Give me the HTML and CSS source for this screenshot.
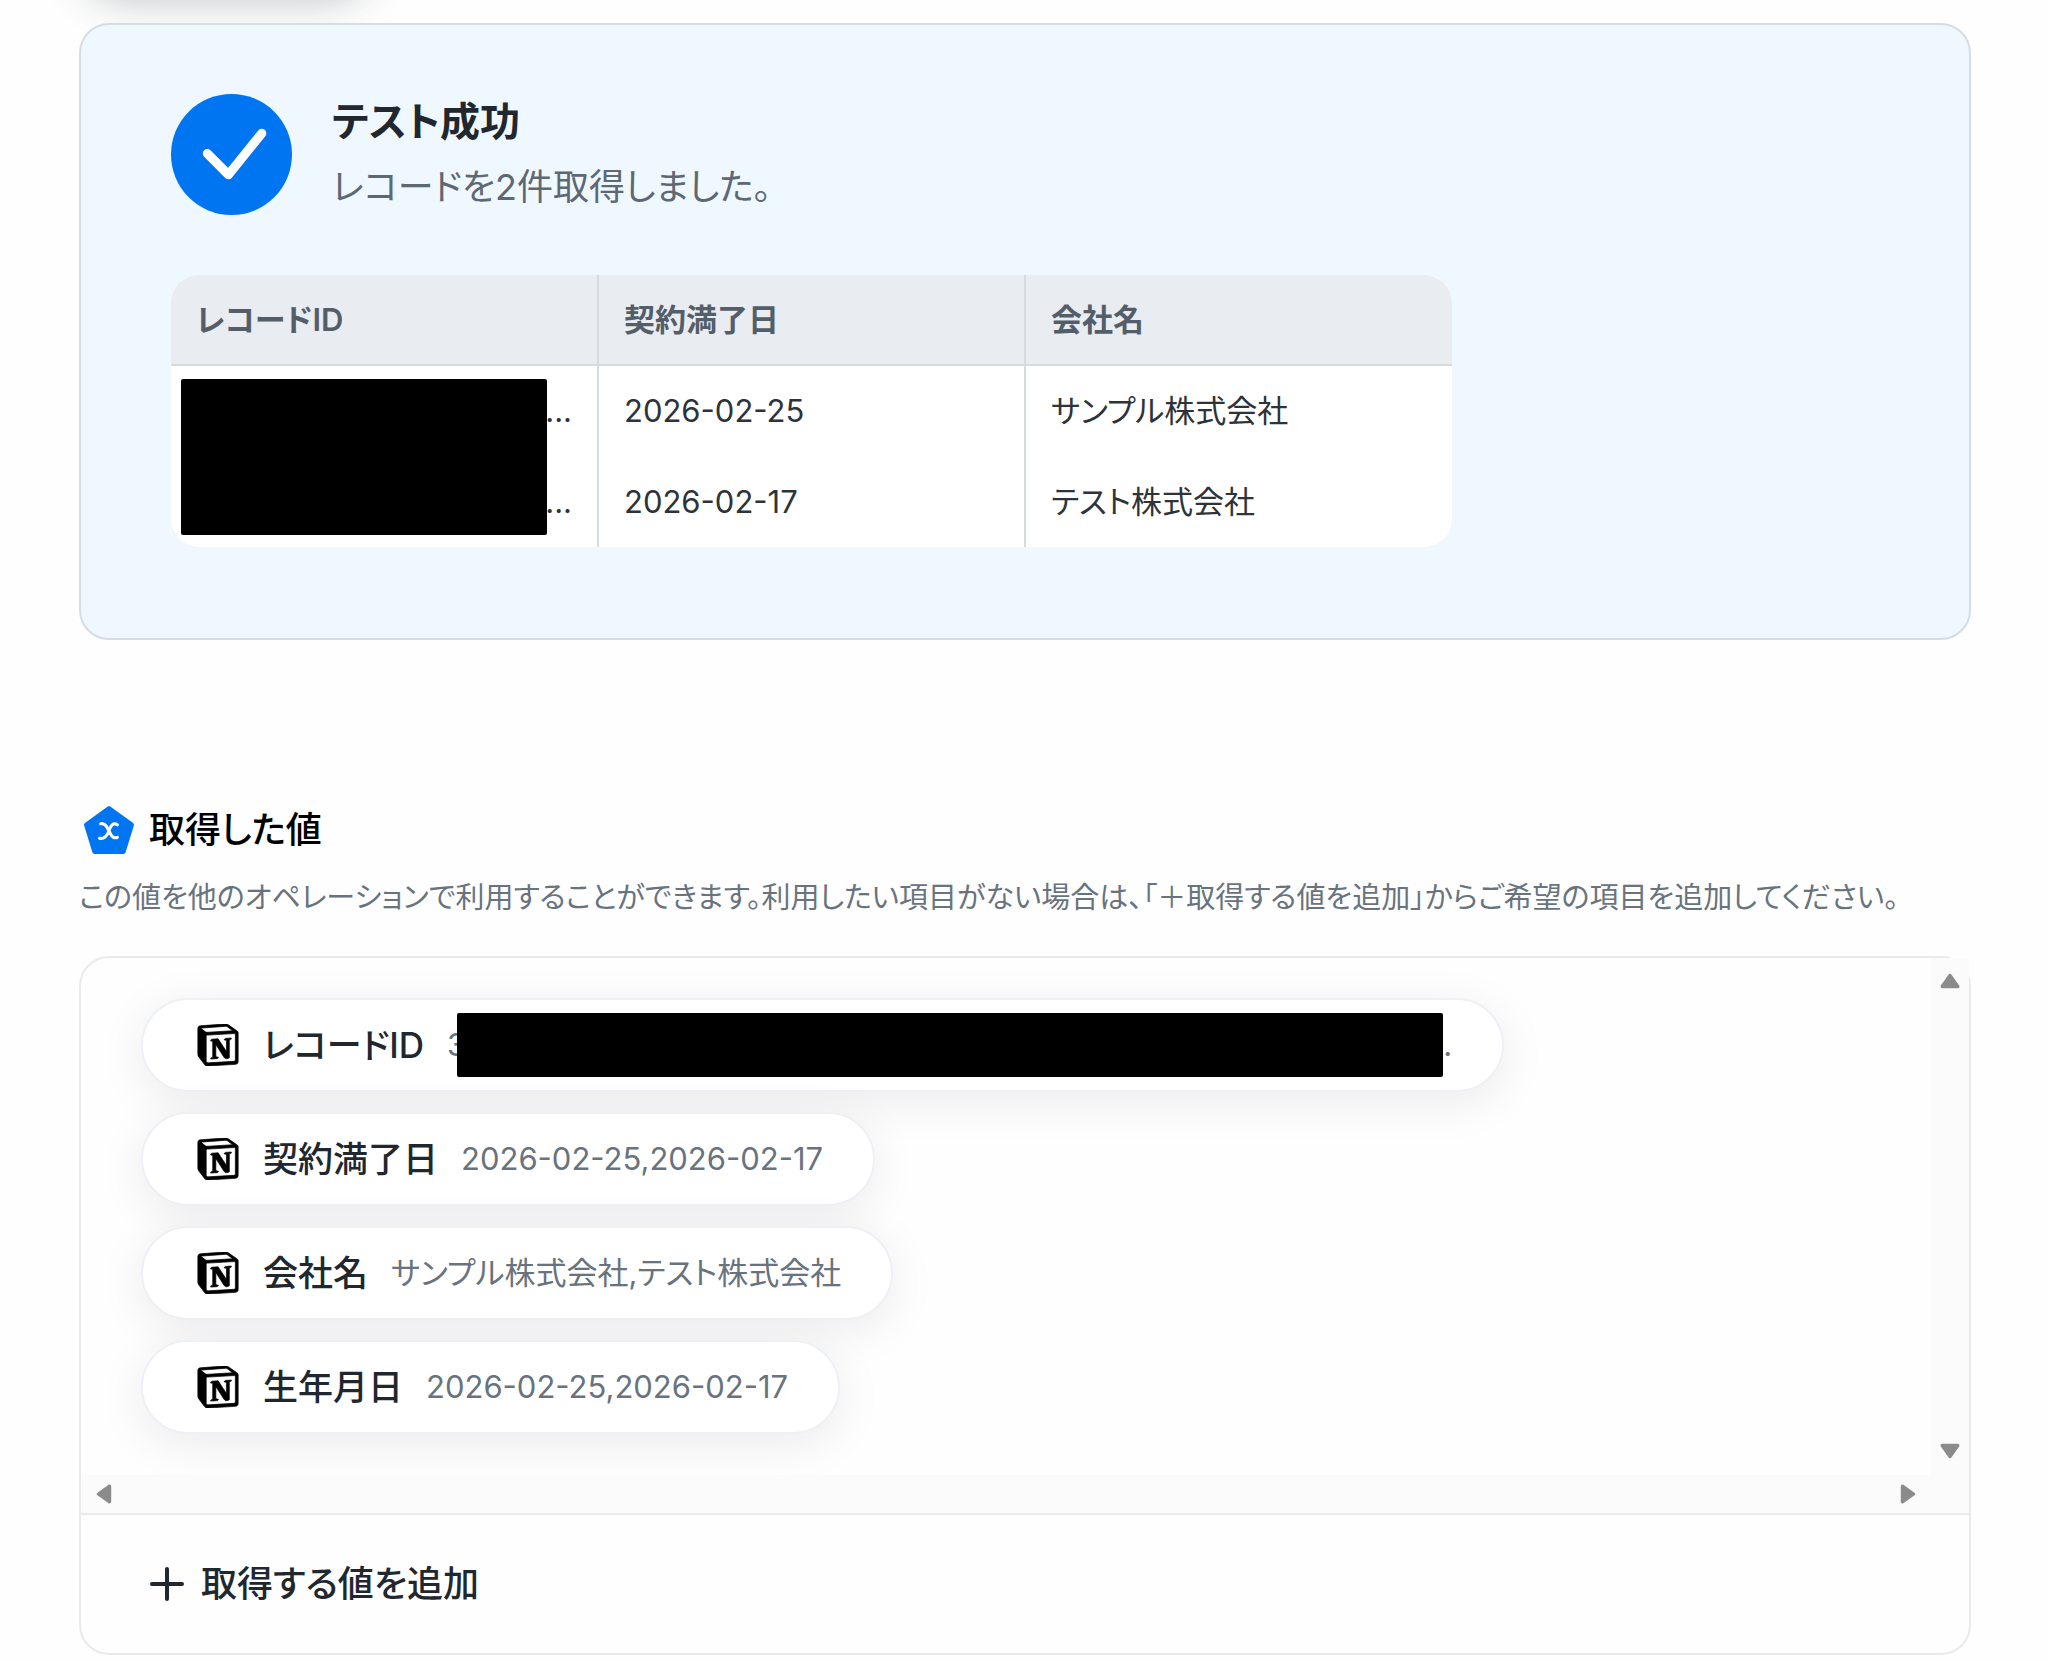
FILE: index.html
```html
<!DOCTYPE html>
<html lang="ja">

<head>
    <meta charset="utf-8">
    <title>テスト結果</title>
    <meta name="viewport" content="width=device-width, initial-scale=1">
    <link rel="stylesheet" href="styles.css">
</head>

<body>
    <!-- icons used more than once -->
    <svg class="sprite" aria-hidden="true">
        <symbol id="notion" viewBox="0 0 24 24">
            <path fill="#fff" d="M1 1.500L17 .800 23 5V22L5 23.500 1 18z" />
            <path fill="#000" d="M1 2L5 6.500V23L1 18z" />
            <path stroke="#000" stroke-width=".4" d="M4.459 4.208c.746.606 1.026.56 2.428.466l13.215-.793c.28 0 .047-.28-.046-.326L17.86 1.968c-.42-.326-.981-.7-2.055-.607L3.01 2.295c-.466.046-.56.28-.374.466zM1.936 1.035l13.31-.98c1.634-.14 2.055-.047 3.082.7l4.249 2.986c.7.513.934.653.934 1.213v16.378c0 1.026-.373 1.634-1.68 1.726l-15.458.934c-.98.047-1.448-.093-1.962-.747l-3.129-4.06c-.56-.747-.793-1.306-.793-1.96V2.667c0-.839.374-1.54 1.447-1.632zM5.252 7.288v13.904c0 .747.373 1.027 1.214.98l14.523-.84c.841-.046.935-.56.935-1.167V6.354c0-.606-.233-.933-.748-.887l-15.177.887c-.56.047-.747.327-.747.933zm14.337.745c.093.42 0 .84-.42.888l-.7.14v10.264c-.608.327-1.168.514-1.635.514-.748 0-.935-.234-1.495-.933l-4.577-7.186v6.952L12.210 19s0 .84-1.168.84l-3.222.186c-.093-.186 0-.653.327-.746l.84-.233V9.854L7.822 9.760c-.094-.42.14-1.026.793-1.073l3.456-.233 4.764 7.279v-6.440l-1.215-.139c-.093-.514.28-.887.747-.933z" />
        </symbol>
        <symbol id="arrow" viewBox="0 0 18 14">
            <path d="M9 2L16 12H2z" stroke-width="3" stroke-linejoin="round" />
        </symbol>
    </svg>

    <div class="allcontent">
        <div class="previous"></div>

        <section class="result">
            <div class="resultHead">
                <svg class="check" viewBox="0 0 120 120">
                    <circle cx="60" cy="60" r="60" />
                    <path d="M36 59L57 80L90 39" />
                </svg>
                <div>
                    <h1>テスト成功</h1>
                    <p>レコードを2件取得しました。</p>
                </div>
            </div>
            <div class="tableBox">
                <table>
                    <thead>
                        <tr>
                            <th>レコードID</th>
                            <th>契約満了日</th>
                            <th>会社名</th>
                        </tr>
                    </thead>
                    <tbody>
                        <tr>
                            <td class="idCell">...</td>
                            <td>2026-02-25</td>
                            <td>サンプル株式会社</td>
                        </tr>
                        <tr>
                            <td class="idCell">...</td>
                            <td>2026-02-17</td>
                            <td>テスト株式会社</td>
                        </tr>
                    </tbody>
                </table>
                <span class="mask"></span>
            </div>
        </section>

        <section class="values">
            <h2>
                <svg class="pentagon" viewBox="0 0 50 50">
                    <path class="shape" d="M25 4L47 20L39 46H11L3 20z" />
                    <path class="cross" d="M17 19Q21 18 24 24L26 28Q29 34 33 32M33 20Q29 17 26 23L24 28Q21 34 16 33" />
                </svg>
                取得した値
            </h2>
            <p class="help">この値を他のオペレーションで利用することができます。利用したい項目がない場合は、「＋取得する値を追加」からご希望の項目を追加してください。</p>

            <div class="valueBox">
                <div class="scroller">
                    <ul>
                        <li>
                            <svg class="notion"><use href="#notion" /></svg>
                            <span class="label">レコードID</span>
                            <span class="value masked">3<span class="bar"></span>.</span>
                        </li>
                        <li>
                            <svg class="notion"><use href="#notion" /></svg>
                            <span class="label">契約満了日</span>
                            <span class="value">2026-02-25,2026-02-17</span>
                        </li>
                        <li>
                            <svg class="notion"><use href="#notion" /></svg>
                            <span class="label">会社名</span>
                            <span class="value">サンプル株式会社,テスト株式会社</span>
                        </li>
                        <li>
                            <svg class="notion"><use href="#notion" /></svg>
                            <span class="label">生年月日</span>
                            <span class="value">2026-02-25,2026-02-17</span>
                        </li>
                    </ul>
                    <div class="track vertical">
                        <svg class="arrow"><use href="#arrow" /></svg>
                        <svg class="arrow down"><use href="#arrow" /></svg>
                    </div>
                    <div class="track horizontal">
                        <svg class="arrow left"><use href="#arrow" /></svg>
                        <svg class="arrow right"><use href="#arrow" /></svg>
                    </div>
                    <div class="track"></div>
                </div>
                <button class="add" type="button">
                    <svg class="plus" viewBox="0 0 34 34">
                        <path d="M17 2V32M2 17H32" />
                    </svg>
                    取得する値を追加
                </button>
            </div>
        </section>
    </div>
</body>

</html>
```
FILE: styles.css
```css
* {
    box-sizing: border-box;
}

body {
    margin: 0;
    background: #fefefe;
    color: #21272e;
    font-family: Inter, "Noto Sans CJK JP", sans-serif;
    font-feature-settings: "palt";
    overflow-x: hidden;
}

h1,
h2,
p,
ul {
    margin: 0;
    padding: 0;
}

.sprite {
    display: none;
}

.allcontent {
    padding: 0 77px 6px 79px;
}

/* button above the fold, only its shadow reaches in */
.previous {
    width: 290px;
    height: 92px;
    margin: -98px 0 29px 2px;
    border-radius: 46px;
    box-shadow: 0 4px 44px rgba(30, 40, 50, .3);
}

.result {
    padding: 69px 90px 91px;
    background: #eff7ff;
    border: 2px solid #d5dde4;
    border-radius: 30px;
}

.resultHead {
    display: flex;
    gap: 40px;
    margin-bottom: 60px;
}

.check {
    width: 121px;
    height: 121px;
    fill: #0075f2;
}

.check path {
    fill: none;
    stroke: #fff;
    stroke-width: 9;
    stroke-linecap: round;
    stroke-linejoin: round;
}

h1 {
    font-size: 40px;
    line-height: 56px;
    font-weight: 600;
}

.resultHead p {
    margin-top: 12px;
    font-size: 36px;
    line-height: 50px;
    color: #5e6873;
}

.tableBox {
    position: relative;
    width: 75%;
    border-radius: 28px;
    background: #fff;
    overflow: hidden;
}

table {
    width: 100%;
    border-collapse: collapse;
    table-layout: fixed;
    font-size: 31px;
    line-height: 40px;
}

th,
td {
    height: 91px;
    padding: 0 25px;
    text-align: left;
    border-left: 2px solid #d5dbe1;
}

th:first-child,
td:first-child {
    border-left: none;
}

th {
    height: 90px;
    background: #e9ecf1;
    border-bottom: 2px solid #d5dbe1;
    color: #535e69;
    font-weight: 600;
}

td {
    color: #2d3339;
}

.idCell {
    text-align: right;
}

.mask {
    position: absolute;
    left: 10px;
    top: 104px;
    width: 366px;
    height: 156px;
    border-radius: 2px;
    background: #000;
}

.values {
    margin-top: 160px;
}

h2 {
    display: flex;
    align-items: center;
    gap: 14px;
    padding-left: 4px;
    font-size: 36px;
    line-height: 60px;
    font-weight: 500;
    color: #000;
}

.pentagon {
    width: 52px;
    height: 52px;
}

.pentagon .shape {
    fill: #0075f2;
    stroke: #0075f2;
    stroke-width: 4;
    stroke-linejoin: round;
}

.pentagon .cross {
    fill: none;
    stroke: #fff;
    stroke-width: 3;
    stroke-linecap: round;
}

.help {
    margin: 18px 0 38px;
    font-size: 29px;
    line-height: 40px;
    color: #68737d;
}

.valueBox {
    border: 2px solid #e9eaeb;
    border-radius: 30px;
}

.scroller {
    display: grid;
    grid-template-columns: 1fr 38px;
    border-bottom: 2px solid #e9eaeb;
}

ul {
    display: flex;
    flex-direction: column;
    align-items: flex-start;
    gap: 20px;
    padding: 40px 60px 41px;
    list-style: none;
}

li {
    display: flex;
    align-items: center;
    height: 94px;
    padding: 0 50px 0 54px;
    line-height: 44px;
    background: #fff;
    border: 2px solid #edf1f5;
    border-radius: 47px;
    box-shadow: 0 10px 48px rgba(0, 0, 0, .08);
}

.notion {
    width: 42px;
    height: 42px;
    margin-right: 24px;
}

.label {
    margin-right: 23px;
    font-size: 35px;
    font-weight: 500;
}

.value {
    font-size: 31px;
    color: #68737d;
}

.masked {
    display: flex;
    align-items: center;
}

.bar {
    width: 986px;
    height: 64px;
    margin-left: -9px;
    border-radius: 2px;
    background: #000;
}

.track {
    display: flex;
    align-items: center;
    justify-content: space-between;
    background: #fbfbfb;
}

.vertical {
    flex-direction: column;
    padding: 15px 0 16px;
}

.horizontal {
    height: 38px;
    padding: 0 13px;
}

.arrow {
    width: 20px;
    height: 16px;
    fill: #8b8b8b;
    stroke: #8b8b8b;
}

.down {
    transform: rotate(180deg);
}

.left {
    transform: rotate(-90deg);
}

.right {
    transform: rotate(90deg);
}

.add {
    display: flex;
    align-items: center;
    gap: 17px;
    width: 100%;
    height: 138px;
    padding: 0 69px;
    background: none;
    border: none;
    font: inherit;
    font-size: 36px;
    line-height: 44px;
    font-weight: 500;
    color: #21272e;
    cursor: pointer;
}

.plus {
    width: 34px;
    height: 34px;
    fill: none;
    stroke: #21272e;
    stroke-width: 4;
    stroke-linecap: round;
}
```
